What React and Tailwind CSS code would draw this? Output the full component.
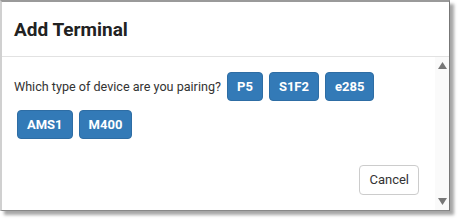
const devices = ['P5', 'S1F2', 'e285', 'AMS1', 'M400'];

const DeviceButton = ({ label }) => (
  <button
    type="button"
    className="inline-block align-middle mx-[3px] my-[4px] h-[29px] px-[9px] rounded-[4px] border border-[#2e6da4] bg-[#337ab7] text-white text-[13px] font-bold leading-none"
  >
    {label}
  </button>
);

export default function App() {
  return (
    <div className="w-[461px] h-[223px] bg-white font-['Roboto',sans-serif] text-[#333]">
      <div className="flex flex-col w-[450px] h-[211px] bg-white border-t-2 border-l-2 border-r border-b border-t-[#9a9a9a] border-l-[#d0d0d0] border-r-[#777] border-b-[#888] shadow-[4px_4px_3px_rgba(0,0,0,0.35)]">
        <div className="h-[55px] flex items-center px-[12px] pt-[1px] border-b border-[#e2e2e2]">
          <h1 className="text-[19px] font-bold text-[#222] leading-none">Add Terminal</h1>
        </div>
        <div className="flex flex-1 min-h-0">
          <div className="flex-1 flex flex-col pl-[12px] pr-[16px] pt-[10px]">
            <div className="text-[12.6px] leading-[37px]">
              <span className="align-middle">Which type of device are you pairing?</span>{' '}
              {devices.map((d) => (
                <DeviceButton key={d} label={d} />
              ))}
            </div>
            <div className="flex justify-end mt-auto mb-[15px]">
              <button
                type="button"
                className="h-[30px] px-[9px] rounded-[4px] border border-[#ccc] bg-white text-[13px] text-[#333]"
              >
                Cancel
              </button>
            </div>
          </div>
          <div className="w-[14px] flex flex-col justify-between items-center py-[5px] bg-[#fafafa]">
            <svg width="9" height="7" viewBox="0 0 9 7">
              <path d="M4.5 0L9 7H0z" fill="#777" />
            </svg>
            <svg width="9" height="7" viewBox="0 0 9 7">
              <path d="M0 0H9L4.5 7z" fill="#777" />
            </svg>
          </div>
        </div>
      </div>
    </div>
  );
}
